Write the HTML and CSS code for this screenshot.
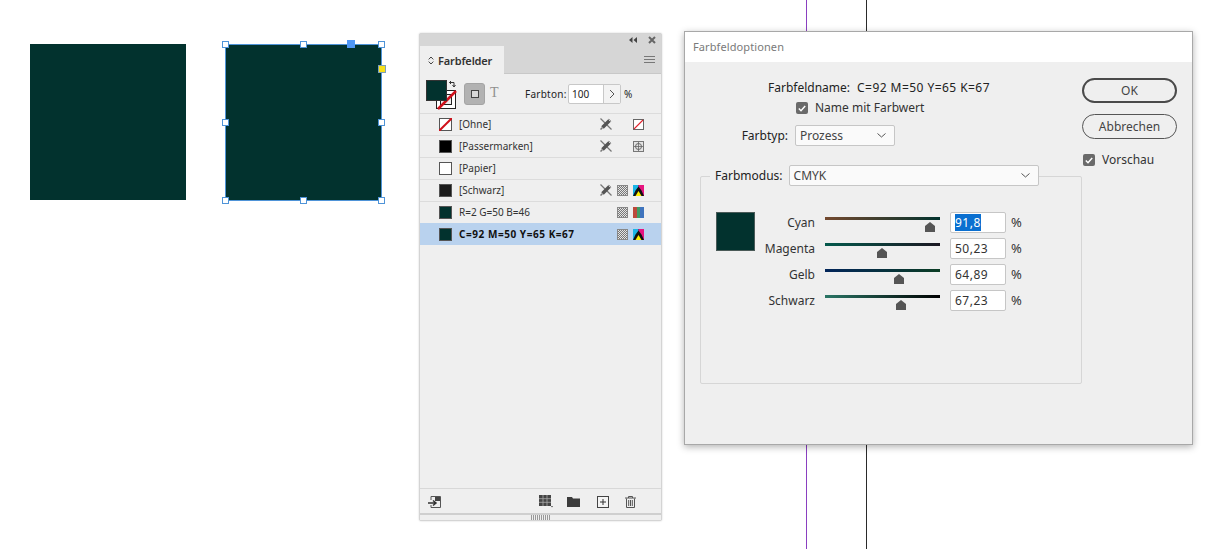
FILE: index.html
```html
<!DOCTYPE html>
<html lang="de">
<head>
<meta charset="utf-8">
<title>Farbfeldoptionen</title>
<link rel="stylesheet" href="styles.css">
</head>
<body>
<div class="canvas">
  <div class="guide guide-purple"></div>
  <div class="guide guide-black"></div>

  <div class="shape shape-a"></div>
  <div class="shape shape-b">
    <i class="h tl"></i><i class="h tm"></i><i class="h tr"></i>
    <i class="h ml"></i><i class="h mr"></i>
    <i class="h bl"></i><i class="h bm"></i><i class="h br"></i>
    <i class="h-blue"></i><i class="h-yellow"></i>
  </div>

  <section class="panel">
    <div class="panel-top">
      <svg class="ico-collapse" width="8" height="6" viewBox="0 0 8 6"><path d="M3.500 0v6L0 3zM8 0v6L4.500 3z" fill="#444"/></svg>
      <svg class="ico-close" width="8" height="8" viewBox="0 0 8 8"><path d="M1 1l6 6M7 1L1 7" stroke="#666" stroke-width="2"/></svg>
    </div>
    <div class="tabs">
      <div class="tab">
        <svg width="6" height="9" viewBox="0 0 6 9"><path d="M.7 3.400L3 1l2.300 2.400M.7 5.600L3 8l2.300-2.400" fill="none" stroke="#444"/></svg>
        <span>Farbfelder</span>
      </div>
      <div class="tab-rest">
        <svg width="11" height="7" viewBox="0 0 11 7"><path d="M0 .5h11M0 3.500h11M0 6.500h11" stroke="#777"/></svg>
      </div>
    </div>
    <div class="controls">
      <div class="fillstroke">
        <svg width="31" height="30" viewBox="0 0 31 30">
          <rect x="10.500" y="10.500" width="19" height="18" fill="#fff" stroke="#222"/>
          <rect x="14.500" y="14.500" width="11" height="10" fill="#eee" stroke="#222"/>
          <path d="M12 29L30 11" stroke="#d0111b" stroke-width="2.500"/>
          <rect x=".5" y=".5" width="20" height="20" fill="#02322e" stroke="#333"/>
          <path d="M23.500 2.500h4.500v4M26.500 5L28 7l1.500-2M25 1l-1.500 1.500L25 4" fill="none" stroke="#333" stroke-width="1"/>
        </svg>
      </div>
      <div class="ctl-btn"><span></span></div>
      <span class="ctl-t">T</span>
      <span class="ctl-label">Farbton:</span>
      <div class="tint">
        <span class="tint-val">100</span>
        <span class="tint-arrow"><svg width="6" height="10" viewBox="0 0 6 10"><path d="M1 1l4 4-4 4" fill="none" stroke="#555"/></svg></span>
      </div>
      <span class="ctl-pct">%</span>
    </div>

    <ul class="swatches">
      <li class="sw">
        <span class="chip chip-none"><svg width="13" height="13" viewBox="0 0 13 13"><path d="M0 13L13 0" stroke="#d0111b" stroke-width="2"/></svg></span>
        <span class="sw-name">[Ohne]</span>
        <span class="sw-icons">
          <svg width="12" height="12" viewBox="0 0 12 12"><use href="#pencil"/></svg>
          <span class="blank"></span>
          <svg width="11" height="11" viewBox="0 0 11 11"><rect x=".5" y=".5" width="10" height="10" fill="#fff" stroke="#666"/><path d="M1 10l9-9" stroke="#e0232d" stroke-width="1.100"/></svg>
        </span>
      </li>
      <li class="sw">
        <span class="chip chip-black"></span>
        <span class="sw-name">[Passermarken]</span>
        <span class="sw-icons">
          <svg width="12" height="12" viewBox="0 0 12 12"><use href="#pencil"/></svg>
          <span class="blank"></span>
          <svg width="11" height="11" viewBox="0 0 11 11"><rect x=".5" y=".5" width="10" height="10" fill="#e4e4e4" stroke="#777"/><circle cx="5.500" cy="5.500" r="3" fill="none" stroke="#666"/><path d="M5.500 1v9M1 5.500h9" stroke="#666" stroke-width=".8"/></svg>
        </span>
      </li>
      <li class="sw">
        <span class="chip chip-white"></span>
        <span class="sw-name">[Papier]</span>
      </li>
      <li class="sw">
        <span class="chip chip-reg"></span>
        <span class="sw-name">[Schwarz]</span>
        <span class="sw-icons">
          <svg width="12" height="12" viewBox="0 0 12 12"><use href="#pencil"/></svg>
          <span class="mesh"></span>
          <svg width="11" height="11" viewBox="0 0 11 11"><use href="#cmyk"/></svg>
        </span>
      </li>
      <li class="sw">
        <span class="chip chip-teal"></span>
        <span class="sw-name">R=2 G=50 B=46</span>
        <span class="sw-icons">
          <span class="blank-g"></span>
          <span class="mesh"></span>
          <span class="rgb"></span>
        </span>
      </li>
      <li class="sw sw-selected">
        <span class="chip chip-teal"></span>
        <span class="sw-name">C=92 M=50 Y=65 K=67</span>
        <span class="sw-icons">
          <span class="blank-g"></span>
          <span class="mesh"></span>
          <svg width="11" height="11" viewBox="0 0 11 11"><use href="#cmyk"/></svg>
        </span>
      </li>
    </ul>

    <div class="panel-foot">
      <svg width="13" height="12" viewBox="0 0 13 12"><path d="M3 4V.5h9.500v11H3V9" fill="none" stroke="#555"/><rect x="7" y="1" width="5" height="4" fill="#444"/><path d="M0 7h7M5 4.500L8 7 5 9.500" fill="none" stroke="#333" stroke-width="1.500"/></svg>
      <span class="foot-gap"></span>
      <svg class="f-lib" width="14" height="13" viewBox="0 0 14 13"><path d="M0 0h12v11H0z" fill="#444"/><path d="M4 0v11M8 0v11M0 3.700h12M0 7.300h12" stroke="#aaa" stroke-width=".8"/><path d="M12 11h2l-1 1.500z" fill="#444"/></svg>
      <svg class="f-folder" width="13" height="10" viewBox="0 0 13 10"><path d="M0 0h5l1 1.500h7V10H0z" fill="#3c3c3c"/></svg>
      <svg class="f-new" width="12" height="12" viewBox="0 0 12 12"><rect x=".5" y=".5" width="11" height="11" fill="#f4f4f4" stroke="#444"/><path d="M6 3v6M3 6h6" stroke="#333"/></svg>
      <svg class="f-trash" width="11" height="12" viewBox="0 0 11 12"><path d="M0 2h11M3.500 2V.5h4V2M1.500 2.500v9h8v-9M3.700 4v6M5.500 4v6M7.300 4v6" fill="none" stroke="#555"/></svg>
    </div>
    <div class="panel-grip"><span></span></div>
  </section>

  <section class="dialog">
    <header class="dlg-title">Farbfeldoptionen</header>
    <div class="dlg-body">
      <div class="dlg-main">
        <div class="name-row"><span>Farbfeldname:</span><span class="name-val">C=92 M=50 Y=65 K=67</span></div>
        <label class="check check-name"><span class="box"><svg width="8" height="7" viewBox="0 0 8 7"><path d="M.8 3.500l2.200 2.200L7.200 1" fill="none" stroke="#fff" stroke-width="1.500"/></svg></span>Name mit Farbwert</label>
        <div class="type-row">
          <span class="type-label">Farbtyp:</span>
          <div class="select select-type"><span>Prozess</span><svg width="9" height="5" viewBox="0 0 9 5"><path d="M.5.500l4 3.500 4-3.500" fill="none" stroke="#555"/></svg></div>
        </div>
        <div class="group">
          <div class="mode-row">
            <span class="mode-label">Farbmodus:</span>
            <div class="select select-mode"><span>CMYK</span><svg width="9" height="5" viewBox="0 0 9 5"><path d="M.5.500l4 3.500 4-3.500" fill="none" stroke="#555"/></svg></div>
          </div>
          <div class="color-area">
            <div class="preview"></div>
            <div class="sliders">
              <div class="slider-row">
                <span class="s-label">Cyan</span>
                <div class="track t-c"><i class="thumb" style="left:100px"></i></div>
                <div class="num"><span class="sel">91,8</span></div>
                <span class="pct">%</span>
              </div>
              <div class="slider-row">
                <span class="s-label">Magenta</span>
                <div class="track t-m"><i class="thumb" style="left:52px"></i></div>
                <div class="num">50,23</div>
                <span class="pct">%</span>
              </div>
              <div class="slider-row">
                <span class="s-label">Gelb</span>
                <div class="track t-y"><i class="thumb" style="left:69px"></i></div>
                <div class="num">64,89</div>
                <span class="pct">%</span>
              </div>
              <div class="slider-row">
                <span class="s-label">Schwarz</span>
                <div class="track t-k"><i class="thumb" style="left:71px"></i></div>
                <div class="num">67,23</div>
                <span class="pct">%</span>
              </div>
            </div>
          </div>
        </div>
      </div>
      <aside class="dlg-side">
        <div class="btn btn-primary">OK</div>
        <div class="btn">Abbrechen</div>
        <label class="check check-prev"><span class="box"><svg width="8" height="7" viewBox="0 0 8 7"><path d="M.8 3.500l2.200 2.200L7.200 1" fill="none" stroke="#fff" stroke-width="1.500"/></svg></span>Vorschau</label>
      </aside>
    </div>
  </section>

  <svg class="defs" width="0" height="0">
    <defs>
      <g id="pencil">
        <path d="M.5.5l11 11" stroke="#777" stroke-width="1.200"/>
        <path d="M10 2L2.500 9.500" stroke="#555" stroke-width="3.600"/>
        <path d="M2.500 9.500L.5 11.500" stroke="#777" stroke-width="1.500"/>
        <path d="M8.500 1.500l2 2" stroke="#eee" stroke-width=".8"/>
      </g>
      <g id="cmyk">
        <rect width="11" height="11" fill="#111"/>
        <path d="M0 0h5.500v1.500L2.500 5.500 0 11z" fill="#19b5e6"/>
        <path d="M11 0H5.500v1.500L8.500 5.500 11 11z" fill="#e6157f"/>
        <path d="M2.500 11l3-5 3 5z" fill="#fff200"/>
      </g>
    </defs>
  </svg>
</div>
</body>
</html>
```
FILE: styles.css
```css
* { box-sizing: border-box; }
html, body { margin: 0; padding: 0; background: #fff; }
body { font-family: "Noto Sans", "Open Sans", sans-serif; color: #222; }
ul { list-style: none; margin: 0; padding: 0; }

.canvas { position: relative; width: 1226px; height: 549px; overflow: hidden; background: #fff; }
.defs { position: absolute; }

.guide { position: absolute; top: 0; bottom: 0; width: 1px; }
.guide-purple { left: 806px; background: #8a3fc0; }
.guide-black { left: 866px; background: #2a2a2a; }

.shape { position: absolute; top: 44px; height: 157px; background: #02322e; }
.shape-a { left: 30px; width: 156px; height: 156px; }
.shape-b { left: 225px; width: 157px; border: 1px solid #4f94d8; }

.h { position: absolute; width: 7px; height: 7px; background: #fff; border: 1px solid #4f94d8; }
.tl { left: -4px; top: -4px; } .tm { left: 74px; top: -4px; } .tr { left: 152px; top: -4px; }
.ml { left: -4px; top: 74px; } .mr { left: 152px; top: 74px; }
.bl { left: -4px; top: 152px; } .bm { left: 74px; top: 152px; } .br { left: 152px; top: 152px; }
.h-blue { position: absolute; left: 121px; top: -5px; width: 8px; height: 8px; background: #4f97f5; }
.h-yellow { position: absolute; left: 152px; top: 20px; width: 8px; height: 8px; background: #f6e01a; border: 1px solid #7da0b8; }

/* Panel */
.panel {
  position: absolute; left: 419px; top: 33px; width: 243px; height: 488px;
  background: #efefef; border: 1px solid #d4d4d4; border-radius: 2px;
  display: flex; flex-direction: column; font-size: 10px;
  box-shadow: 0 0 2px rgba(0,0,0,.2);
}
.panel-top { height: 12px; background: #d6d6d6; display: flex; align-items: center; justify-content: flex-end; gap: 11px; padding-right: 5px; flex: none; }
.tabs { height: 28px; display: flex; flex: none; }
.tab { width: 84px; background: #efefef; display: flex; align-items: center; gap: 4px; padding-left: 8px; font-size: 11px; font-weight: 600; letter-spacing: -.15px; color: #333; }
.tab-rest { flex: 1; background: #d6d6d6; border-bottom: 1px solid #c8c8c8; display: flex; align-items: center; justify-content: flex-end; padding-right: 6px; }
.controls { height: 39px; display: flex; align-items: flex-start; padding-left: 6px; flex: none; }
.fillstroke { width: 31px; height: 30px; margin-top: 6px; }
.ctl-btn { width: 21px; height: 22px; margin: 9px 0 0 7px; background: #b2b2b2; border: 1px solid #a4a4a4; border-radius: 3px; display: flex; align-items: center; justify-content: center; }
.ctl-btn span { width: 8px; height: 8px; border: 1.500px solid #444; background: #d8d8d8; }
.ctl-t { width: 12px; margin: 11px 0 0 5px; font-family: "Liberation Serif", serif; font-size: 14px; line-height: 16px; color: #8f8f8f; }
.ctl-label { margin: 13px 0 0 23px; width: 43px; line-height: 14px; letter-spacing: .25px; color: #222; }
.tint { width: 53px; height: 20px; margin-top: 10px; display: flex; border: 1px solid #c8c8c8; border-radius: 2px; background: #fff; }
.tint-val { width: 34px; padding-left: 3px; line-height: 18px; color: #222; }
.tint-arrow { flex: 1; background: #f3f3f3; border-left: 1px solid #c8c8c8; display: flex; align-items: center; justify-content: center; }
.ctl-pct { margin: 13px 0 0 3px; line-height: 14px; }

.swatches { flex: none; }
.sw { height: 22px; border-top: 1px solid #dcdcdc; display: flex; align-items: center; padding: 0 17px 1px 19px; color: #333; }
.sw-name { margin-left: 7px; flex: 1; }
.sw-selected { background: #b9d2ee; color: #111; font-weight: 700; border-top-color: #b9d2ee; }
.sw-selected .sw-name { letter-spacing: .55px; }
.chip { width: 13px; height: 13px; border: 1px solid #555; display: block; flex: none; }
.chip-none { background: #fff; }
.chip-none svg { display: block; margin: -1px; }
.chip-black { background: #000; }
.chip-white { background: #fff; }
.chip-reg { background: #1c1c1c; }
.chip-teal { background: #02322e; }
.sw-icons { display: flex; align-items: center; gap: 5px; flex: none; }
.sw-icons svg { display: block; }
.blank { width: 11px; height: 11px; }
.blank-g { width: 12px; height: 12px; }
.mesh { width: 11px; height: 11px; border: 1px solid #888; background: repeating-conic-gradient(#777 0 25%, #e4e4e4 0 50%) 0 0 / 2px 2px; }
.rgb { width: 11px; height: 11px; background: linear-gradient(90deg, #bd4a3c 0 33%, #3f9d67 33% 66%, #3f74bd 66%); }

.panel-foot {
  margin-top: auto; height: 25px; border-top: 1px solid #d8d8d8; flex: none;
  display: flex; align-items: center; padding: 1px 8px 0;
}
.foot-gap { flex: 1; }
.f-folder { margin-left: 14px; }
.f-new { margin-left: 17px; }
.f-trash { margin: 0 17px 0 16px; }
.panel-grip { height: 7px; flex: none; border-top: 2px solid #cfcfcf; background: #efefef; display: flex; justify-content: center; align-items: center; }
.panel-grip span { width: 19px; height: 5px; background: repeating-linear-gradient(90deg, #999 0 1px, transparent 1px 2px); }

/* Dialog */
.dialog {
  position: absolute; left: 684px; top: 31px; width: 509px; height: 414px;
  background: #efefef; border: 1px solid #a8a8a8;
  box-shadow: 0 2px 7px rgba(0,0,0,.3);
  display: flex; flex-direction: column; font-size: 12px;
}
.dlg-title { height: 30px; background: #fff; padding: 7px 0 0 8px; font-size: 11px; line-height: 16px; color: #7a7a7a; letter-spacing: .1px; flex: none; }
.dlg-body { flex: 1; display: flex; }
.dlg-main { width: 397px; padding-left: 15px; }
.dlg-side { padding: 16px 0 0; width: 96px; }

.name-row { display: flex; gap: 7px; margin: 18px 0 0 68px; line-height: 16px; color: #222; }
.name-val { letter-spacing: .45px; }
.check { display: flex; align-items: center; color: #333; }
.box { width: 12px; height: 12px; background: #6a6a6a; border-radius: 2px; display: flex; align-items: center; justify-content: center; flex: none; }
.check-name { margin: 4px 0 0 96px; gap: 7px; line-height: 16px; }
.type-row { display: flex; align-items: center; margin-top: 9px; }
.type-label { width: 88px; text-align: right; color: #222; }
.select { height: 21px; background: #fafafa; border: 1px solid #c6c6c6; border-radius: 2px; display: flex; align-items: center; justify-content: space-between; padding: 0 8px 0 4px; color: #444; }
.select-type { width: 100px; margin-left: 7px; }
.select-mode { width: 250px; }
.group { position: relative; margin-top: 30px; height: 208px; border: 1px solid #d6d6d6; border-radius: 2px; }
.mode-row { position: absolute; left: 9px; top: -12px; display: flex; align-items: center; }
.mode-label { background: #efefef; padding: 0 6px 0 5px; line-height: 21px; color: #222; }
.color-area { display: flex; padding: 35px 0 0 15px; }
.preview { width: 39px; height: 39px; background: #02322e; border: 1px solid #4a5a58; flex: none; }
.sliders { display: flex; flex-direction: column; }
.slider-row { height: 26px; display: flex; align-items: flex-start; }
.s-label { width: 60px; text-align: right; line-height: 22px; color: #333; }
.track { position: relative; width: 115px; height: 3px; margin: 5px 0 0 10px; }
.t-c { background: linear-gradient(90deg, #74492f, #02322e); }
.t-m { background: linear-gradient(90deg, #04594c, #1c1722); }
.t-y { background: linear-gradient(90deg, #02255a, #0b3d24); }
.t-k { background: linear-gradient(90deg, #2a7565, #000); }
.thumb { position: absolute; top: 5px; width: 10px; height: 10px; background: #555; clip-path: polygon(50% 0, 100% 40%, 100% 100%, 0 100%, 0 40%); }
.num { width: 56px; height: 21px; margin-left: 10px; background: #fff; border: 1px solid #c6c6c6; border-radius: 2px; padding-left: 4px; line-height: 20px; letter-spacing: .5px; color: #333; }
.sel { background: #0a6fd0; color: #fff; }
.pct { margin-left: 5px; line-height: 20px; font-size: 13px; color: #333; }

.btn { width: 95px; height: 25px; border: 1px solid #555; border-radius: 13px; text-align: center; line-height: 23px; color: #444; margin-bottom: 11px; }
.btn-primary { border: 2px solid #4a4a4a; line-height: 21px; }
.check-prev { gap: 7px; margin: 13px 0 0 1px; line-height: 16px; }
```
